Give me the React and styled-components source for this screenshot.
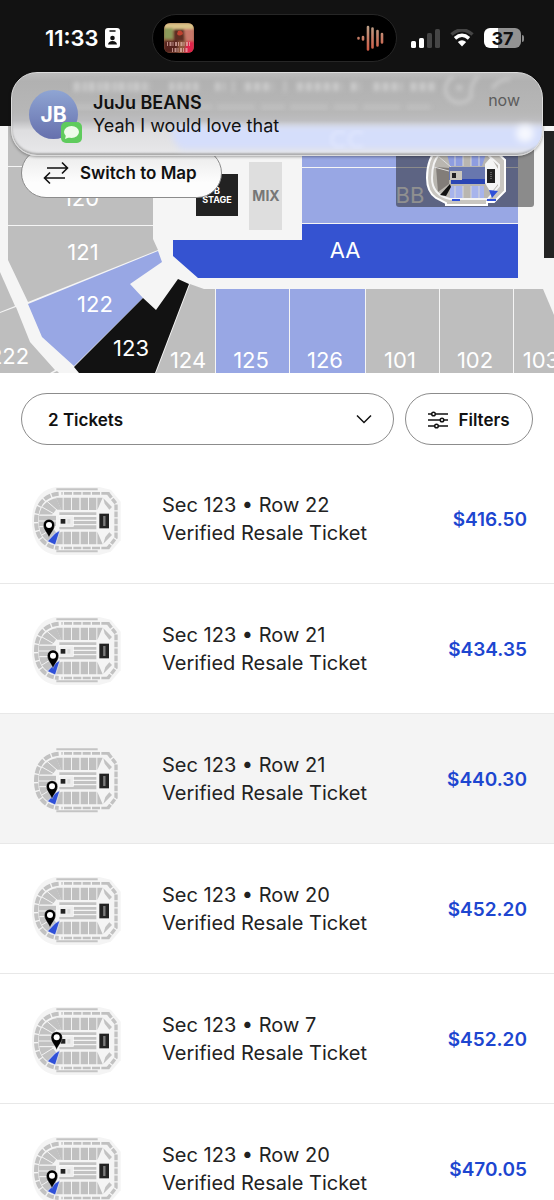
import React, { useState } from 'react'
import styled, { createGlobalStyle } from 'styled-components'

const GlobalStyle = createGlobalStyle`
	* {
		box-sizing: border-box;
	}
	body {
		margin: 0;
		background-color: #fff;
		font-family: Inter, "Liberation Sans", sans-serif;
		color: #222;
	}
	button, select {
		font-family: inherit;
		color: inherit;
	}
`

const Screen = styled.div`
	position: relative;
	display: flex;
	flex-direction: column;
	height: 100vh;
	overflow: hidden;
`

const Header = styled.header`
	flex: none;
	height: 126px;
	padding: 14px 30px 0;
	background-color: #121212;
	color: #fff;
`

const StatusBar = styled.div`
	display: flex;
	align-items: center;
	height: 48px;
`

const StatusGroup = styled.div`
	flex: 1 0 0;
	display: flex;
	align-items: center;
	justify-content: ${props => props.$align};
	gap: ${props => props.$gap}px;
`

const Time = styled.span`
	margin-left: 15px;
	font-size: 22px;
	font-weight: 600;
`

const Island = styled.div`
	display: flex;
	align-items: center;
	justify-content: space-between;
	width: 245px;
	height: 48px;
	margin-right: 5px;
	padding: 0 12px 0 11px;
	border: 1px solid #262626;
	border-radius: 24px;
	background-color: #000;
`

const Battery = styled.div`
	display: flex;
	align-items: center;
	justify-content: center;
	width: 37px;
	height: 20px;
	border-radius: 6px;
	background: linear-gradient(90deg, #fff 37%, #929292 37%);
	color: #111;
	font-size: 18px;
	font-weight: 700;
`

const BatteryTip = styled.div`
	width: 2px;
	height: 7px;
	margin-left: 1px;
	border-radius: 0 2px 2px 0;
	background-color: #8a8a8a;
`

const BatteryWrap = styled.div`
	display: flex;
	align-items: center;
`

const MapArea = styled.section`
	position: relative;
	flex: none;
`

const SeatMap = styled.svg`
	display: block;
	width: 100%;
	height: auto;
	font-size: 22px;
`

const SwitchButton = styled.button`
	position: absolute;
	top: 22px;
	left: 21px;
	display: flex;
	align-items: center;
	gap: 11px;
	height: 50px;
	padding: 0 24px 0 21px;
	border: 1px solid #8c8c8c;
	border-radius: 25px;
	background: linear-gradient(#e8e8e8, #fdfdfd 70%);
	color: #111;
	font-size: 17px;
	font-weight: 600;
	white-space: nowrap;
`

const Banner = styled.aside`
	position: absolute;
	top: 72px;
	left: 11px;
	right: 11px;
	display: flex;
	align-items: center;
	height: 84px;
	padding: 0 22px 0 17px;
	border: 1px solid #dcdcdc;
	border-radius: 26px;
	overflow: hidden;
	background: linear-gradient(#bdbdbd, #b1b1b1 10%, #b7b7b7 48%, #bdbdbf 58%, #dedee0 70%, #e8e8ea);
	box-shadow: inset 0 -2px 2px #aaa, 0 1px 3px rgba(0, 0, 0, 0.35);
`

const BannerGlow = styled.svg`
	position: absolute;
	top: 0;
	left: 0;
	width: 100%;
	height: 100%;
`

const Avatar = styled.div`
	position: relative;
	display: flex;
	align-items: center;
	justify-content: center;
	width: 49px;
	height: 49px;
	margin-right: 15px;
	border-radius: 50%;
	background: linear-gradient(#8fa5d3, #6670ad);
	color: #fff;
	font-size: 21px;
	font-weight: 700;
`

const AppBadge = styled.svg`
	position: absolute;
	right: -4px;
	bottom: -4px;
`

const Message = styled.div`
	position: relative;
	flex: 1;
	color: #111;
	font-size: 18px;
	line-height: 23px;
`

const Sender = styled.div`
	font-weight: 600;
`

const When = styled.span`
	position: relative;
	align-self: flex-start;
	margin-top: 17px;
	color: #5c5c5c;
	font-size: 16px;
	line-height: 20px;
`

const Toolbar = styled.div`
	flex: none;
	display: flex;
	gap: 11px;
	padding: 20px 21px 9px;
`

const SelectWrap = styled.label`
	position: relative;
	flex: 1;

	svg {
		position: absolute;
		top: 21px;
		right: 22px;
		pointer-events: none;
	}
`

const Select = styled.select`
	appearance: none;
	width: 100%;
	height: 52px;
	padding: 1px 26px 0;
	border: 1px solid #8c8c8c;
	border-radius: 26px;
	background-color: #fff;
	color: #111;
	font-size: 17px;
	font-weight: 600;
`

const FilterButton = styled.button`
	display: flex;
	align-items: center;
	justify-content: center;
	gap: 10px;
	width: 128px;
	height: 52px;
	padding: 1px 0 0;
	border: 1px solid #8c8c8c;
	border-radius: 26px;
	background-color: #fff;
	color: #111;
	font-size: 17px;
	font-weight: 600;
`

const TicketList = styled.ul`
	flex: 1;
	min-height: 0;
	margin: 0;
	padding: 0;
	overflow: hidden;
	list-style: none;
`

const TicketRow = styled.button`
	display: flex;
	align-items: center;
	width: 100%;
	height: 130px;
	padding: 4px 27px 0 32px;
	border: 0;
	border-bottom: 1px solid #e8e8e8;
	background-color: ${props => props.$active ? '#f4f4f4' : '#fff'};
	text-align: left;
	cursor: pointer;
`

const TicketInfo = styled.div`
	flex: 1;
	margin: 0 0 4px 40px;
	font-size: 20px;
	line-height: 28px;
`

const Price = styled.span`
	margin-bottom: 2px;
	color: #1d46d0;
	font-size: 19px;
	font-weight: 600;
`

const tickets = [
	{ id: 1, row: 22, price: '$416.50', pin: [51, 150] },
	{ id: 2, row: 21, price: '$434.35', pin: [63, 152] },
	{ id: 3, row: 21, price: '$440.30', pin: [60, 154] },
	{ id: 4, row: 20, price: '$452.20', pin: [54, 150] },
	{ id: 5, row: 7, price: '$452.20', pin: [74, 127] },
	{ id: 6, row: 20, price: '$470.05', pin: [60, 152] }
]

const GREY = '#bebebe'
const PALE = '#98a7e4'

const sections = [
	{ fill: GREY, points: '8,126 153,126 153,166 8,166' },
	{ fill: GREY, points: '8,167 153,167 153,225 8,225' },
	{ fill: GREY, points: '8,226 153,226 153,239 158,250 28,302 8,260' },
	{ fill: GREY, points: '0,272 15,306 0,312' },
	{ fill: GREY, points: '0,313 16,307 30,342 55,370 50,373 0,373' },
	{ fill: GREY, points: '57,371 59,373 53,373' },
	{ fill: PALE, points: '28,304 158,251 162,262 130,284 143,298 74,366 42,337' },
	{ fill: '#121212', points: '143,298 156,310 178,279 189,284 155,373 79,373 74,367' },
	{ fill: GREY, points: '190,284 204,289 215,289 215,373 156,373' },
	{ fill: PALE, points: '216,289 289,289 289,373 216,373' },
	{ fill: PALE, points: '290,289 365,289 365,373 290,373' },
	{ fill: GREY, points: '366,289 439,289 439,373 366,373' },
	{ fill: GREY, points: '440,289 513,289 513,373 440,373' },
	{ fill: GREY, points: '514,289 543,289 554,315 554,373 514,373' },
	{ fill: PALE, points: '302,126 518,126 518,167 302,167' },
	{ fill: PALE, points: '302,168 518,168 518,223 302,223' },
	{ fill: '#3553d1', points: '173,240 302,240 302,224 518,224 518,278 198,278 173,256' },
	{ fill: '#222', points: '196,174 238,174 238,216 196,216' },
	{ fill: '#dedede', points: '249,162 282,162 282,230 249,230' },
	{ fill: '#232323', points: '544,131 554,131 554,258 544,258' }
]

const sectionLabels = [
	['120', 81, 206],
	['121', 83, 260],
	['122', 95, 312],
	['222', 9, 364],
	['123', 131, 356],
	['124', 188, 368],
	['125', 251, 368],
	['126', 325, 368],
	['101', 400, 368],
	['102', 475, 368],
	['103', 541, 368],
	['AA', 345, 258],
	['BB', 410, 203]
]

const Overview = () => (
	<g>
		<rect x="396" y="140" width="138" height="67" rx="3" fill="#222" fillOpacity="0.5" />
		<path d="M438 148 H492 L505 160 V191 L494 202 H487 V205 H446 V203 L436 198 Q427 192 427 178 Q427 158 438 148Z" fill="#c9c6c1" stroke="#fff" strokeWidth="2" />
		<path d="M440 154 H487 L499 165 V186 L488 199 H450 Q432 195 432 178 Q432 161 440 154Z" fill="#b9b6b0" stroke="#f4f4f4" strokeWidth="2" />
		<path d="M447 154 H463 V166 H450Z M471 154 H486 L482 166 H471Z" fill="#8e9de0" />
		<path d="M450 186 H463 V198 H450Z M471 186 H484 V198 H471Z" fill="#a7b4ec" />
		<path d="M455 154 V166 M463 154 V166 M471 154 V166 M479 154 V166 M455 186 V198 M463 186 V198 M471 186 V198 M479 186 V198" stroke="#d8d8d8" />
		<path d="M436 167 L449 168 V184 L438 192Z" fill="#827d79" />
		<path d="M438 156 L451 167 M434 167 L449 171" stroke="#ddd" />
		<rect x="449" y="167" width="36" height="13" fill="#6877ae" />
		<rect x="451" y="179" width="34" height="5" fill="#2a45b4" />
		<rect x="450" y="171" width="12" height="9" fill="#cac7bd" />
		<rect x="452" y="173" width="4" height="5" fill="#222" />
		<path d="M485 164 L491 157 L498 169 V184 L491 193 L485 183Z" fill="#f5f5f5" />
		<rect x="487" y="169" width="8" height="14" fill="#222" />
		<path d="M491 172 V180" stroke="#999" strokeDasharray="1 1" />
		<path d="M450 184 L451 187 L446 196 L440 195Z" fill="#111" />
		<path d="M489 190 L498 191 L492 198Z M452 199 H460 V201 H452Z M487 199 H496 V201 H487Z" fill="#2f50d8" />
	</g>
)

const ArenaMap = () => (
	<SeatMap viewBox="0 126 554 247" role="img" aria-label="Seat map">
		<rect x="0" y="126" width="554" height="247" fill="#f5f5f5" />
		{sections.map(section => (
			<polygon key={section.points} points={section.points} fill={section.fill} />
		))}
		<g fill="#fff" textAnchor="middle">
			{sectionLabels.map(([name, x, y]) => (
				<text key={name} x={x} y={y}>{name}</text>
			))}
		</g>
		<g textAnchor="middle" fontWeight="700">
			<text x="217" y="194" fontSize="9" fill="#fff">B</text>
			<text x="217" y="203" fontSize="9" fill="#fff">STAGE</text>
			<text x="266" y="201" fontSize="14" fill="#777">MIX</text>
		</g>
		<Overview />
	</SeatMap>
)

const topBlocks = [95, 120, 146, 171]

const Thumbnail = ({ pin }) => (
	<svg width="90" height="68" viewBox="0 0 270 204" aria-hidden="true">
		<path d="M72 0 H202 L236 8 L266 44 V160 L236 194 L202 204 H72 C26 198 0 162 0 102 C0 42 26 6 72 0Z" fill="#f4f4f4" />
		<path d="M73 7 H197 M73 193 H197" stroke="#c4c4c4" strokeWidth="6" />
		<path d="M232 19 H88" stroke="#c0c0c0" strokeWidth="8" strokeDasharray="24 4" />
		<path d="M232 183 H88" stroke="#c0c0c0" strokeWidth="8" strokeDasharray="24 4" />
		<path d="M80 20 C36 24 12 56 12 102 C12 148 36 180 80 183" fill="none" stroke="#c2c2c2" strokeWidth="12" strokeDasharray="21 4" />
		<path d="M228 19 L252 50 V152 L228 183" fill="none" stroke="#c2c2c2" strokeWidth="10" strokeDasharray="17 4" />
		<path d="M73 34 L88 68 H72 L60 84 H22 C24 62 44 38 73 34Z" fill="#c2c2c2" />
		<path d="M20 86 H72 V118 H20Z" fill="#c2c2c2" />
		<path d="M22 120 H60 L72 136 H88 L73 172 C44 168 24 146 22 120Z" fill="#c2c2c2" />
		<path d="M20 102 H72 M24 84 L72 84 M24 119 L72 119 M30 60 L72 84 M44 42 L76 70 M30 144 L72 118 M44 166 L76 134" stroke="#f4f4f4" strokeWidth="3" />
		{topBlocks.map(x => (
			<path key={x} d={`M${x} 32 H${x + 22} V69 H${x}Z M${x} 134 H${x + 22} V172 H${x}Z`} fill="#c0c0c0" />
		))}
		<path d="M72 32 H92 V69 H88Z M196 32 H212 L196 69Z M88 134 H92 V172 H72Z M196 134 L212 172 H196Z" fill="#c0c0c0" />
		<path d="M214 34 L240 60 L232 68 L218 50Z M240 144 L214 170 L220 150 L232 136Z" fill="#c2c2c2" />
		<path d="M82 76 H193 V84 H82Z M82 90 H193 V98 H82Z M82 102 H193 V111 H82Z M82 115 H193 V127 H82Z" fill="#c2c2c2" />
		<rect x="82" y="87" width="42" height="31" fill="#eee" stroke="#fff" strokeWidth="2" />
		<rect x="86" y="96" width="14" height="14" fill="#222" />
		<rect x="106" y="96" width="9" height="14" fill="#ddd" />
		<polygon points="46,163 70,174 84,130 70,138" fill="#2f50d8" stroke="#f4f4f4" strokeWidth="2" />
		<rect x="202" y="80" width="29" height="44" fill="#222" />
		<path d="M217 88 V116" stroke="#999" strokeWidth="7" strokeDasharray="4 2" />
		<g transform={`translate(${pin[0]} ${pin[1]})`}>
			<path d="M0 2 C-4 -12 -17 -20 -17 -36 A17 17 0 0 1 17 -36 C17 -20 4 -12 0 2Z" fill="#000" stroke="#fff" strokeWidth="1" />
			<circle cx="0" cy="-36" r="9" fill="#fff" />
		</g>
	</svg>
)

const Notification = () => (
	<Banner role="status">
		<BannerGlow viewBox="0 0 532 84" preserveAspectRatio="none" aria-hidden="true">
			<defs>
				<filter id="soft" x="-10%" y="-60%" width="120%" height="220%">
					<feGaussianBlur stdDeviation="3" />
				</filter>
				<filter id="spot" x="-100%" y="-100%" width="300%" height="300%">
					<feGaussianBlur stdDeviation="4" />
				</filter>
				<filter id="faint">
					<feGaussianBlur stdDeviation="2" />
				</filter>
			</defs>
			<path d="M162 54 H540 V78 H170 Q156 66 162 54Z" fill="#d5defb" filter="url(#soft)" />
			<g fill="none" stroke="#cbcbcb" filter="url(#faint)">
				<path d="M62 14 H138" strokeWidth="10" strokeDasharray="6 3 4 2" />
				<path d="M158 14 H190 M204 14 H214" strokeWidth="9" strokeDasharray="5 3" />
				<path d="M222 8 V20 M274 8 V20" strokeWidth="2" />
				<path d="M234 14 H262 M286 14 H332 M340 14 H350 M363 14 H392 M400 14 H426" strokeWidth="9" strokeDasharray="6 3" />
				<path d="M60 35 H420" strokeWidth="6" strokeOpacity="0.4" strokeDasharray="38 6 24 5" />
				<path d="M443 4 A14 14 0 1 0 461 24 Q459 12 468 3" strokeWidth="3" />
				<circle cx="449" cy="15" r="2" strokeWidth="2" />
				<path d="M482 16 Q488 6 500 6" strokeWidth="3" />
			</g>
			<path d="M334 62 A8 8 0 1 0 334 74 M352 62 A8 8 0 1 0 352 74" fill="none" stroke="#e4eaff" strokeWidth="2" filter="url(#faint)" />
			<circle cx="515" cy="62" r="9" fill="#fff" fillOpacity="0.8" filter="url(#spot)" />
		</BannerGlow>
		<Avatar>
			JB
			<AppBadge width="21" height="21" viewBox="0 0 21 21" aria-hidden="true">
				<rect width="21" height="21" rx="5" fill="#5fcb5d" />
				<ellipse cx="10.5" cy="10" rx="7.5" ry="6" fill="#eefbea" />
				<path d="M5 13 L4 17 L9 15Z" fill="#eefbea" />
			</AppBadge>
		</Avatar>
		<Message>
			<Sender>JuJu BEANS</Sender>
			<div>Yeah I would love that</div>
		</Message>
		<When>now</When>
	</Banner>
)

const AlbumArt = () => (
	<svg width="30" height="30" viewBox="0 0 30 30" aria-hidden="true">
		<defs>
			<clipPath id="album"><rect width="30" height="30" rx="6" /></clipPath>
			<filter id="paint"><feGaussianBlur stdDeviation="1.2" /></filter>
		</defs>
		<g clipPath="url(#album)">
			<rect width="30" height="30" fill="#8f5a3f" />
			<g filter="url(#paint)">
				<path d="M0 0 H30 V7 H0Z" fill="#d9c288" />
				<path d="M0 5 H9 V16 H0Z" fill="#8a9a5a" />
				<path d="M10 6 H20 V18 H10Z" fill="#5d2f22" />
				<path d="M20 6 H30 V20 H22Z" fill="#c8786a" />
				<path d="M23 18 H30 V30 H20Z" fill="#e0244c" />
				<path d="M0 18 H14 V30 H0Z" fill="#55211c" />
			</g>
			<path d="M3 21 H26 M8 27 H24" stroke="#e8b9b4" strokeWidth="4" strokeDasharray="1 1.5 2 1" strokeOpacity="0.7" />
			<path d="M14 8 Q18 6 19 11 Q15 14 13 11Z" fill="#c0412f" />
		</g>
	</svg>
)

const PhoneStatus = () => (
	<StatusBar>
		<StatusGroup $align="flex-start" $gap={6}>
			<Time>11:33</Time>
			<svg width="15" height="20" viewBox="0 0 15 20" aria-hidden="true">
				<rect width="15" height="20" rx="3" fill="#fff" />
				<path d="M5 3 H10" stroke="#121212" strokeWidth="1.5" strokeLinecap="round" />
				<circle cx="7.5" cy="10" r="2.3" fill="#121212" />
				<path d="M3 16.5 Q3.5 13 7.5 13 Q11.5 13 12 16.5Z" fill="#121212" />
			</svg>
		</StatusGroup>
		<Island>
			<AlbumArt />
			<svg width="27" height="28" viewBox="0 0 27 28" aria-hidden="true">
				<defs>
					<linearGradient id="wave" gradientUnits="userSpaceOnUse" x1="0" y1="0" x2="0" y2="28">
						<stop offset="0" stopColor="#b9a48c" />
						<stop offset="1" stopColor="#d2553f" />
					</linearGradient>
				</defs>
				<path d="M1.5 14 V14.5 M6 13 V15.5 M11 3 V25.5 M15.5 4.5 V23.5 M20.5 7 V21.5 M25 10 V18.5" stroke="url(#wave)" strokeWidth="2.6" strokeLinecap="round" />
			</svg>
		</Island>
		<StatusGroup $align="flex-end" $gap={10}>
			<svg width="29" height="19" viewBox="0 0 29 19" aria-hidden="true">
				<rect x="0" y="12" width="5" height="7" rx="1.5" fill="#fff" />
				<rect x="8" y="9" width="5" height="10" rx="1.5" fill="#fff" />
				<rect x="16" y="4" width="5" height="15" rx="1.5" fill="#454545" />
				<rect x="24" y="0" width="5" height="19" rx="1.5" fill="#454545" />
			</svg>
			<svg width="24" height="18" viewBox="0 0 24 18" aria-hidden="true">
				<path d="M1.5 5.5 Q12 -3.5 22.5 5.5" fill="none" stroke="#454545" strokeWidth="3.5" />
				<path d="M5 9.3 Q12 3.3 19 9.3" fill="none" stroke="#fff" strokeWidth="3.5" />
				<path d="M12 17.5 L7.8 13 Q12 9.7 16.2 13Z" fill="#fff" />
			</svg>
			<BatteryWrap>
				<Battery>37</Battery>
				<BatteryTip />
			</BatteryWrap>
		</StatusGroup>
	</StatusBar>
)

const App = () => {
	const [quantity, setQuantity] = useState('2')
	const [selected, setSelected] = useState(3)

	return (
		<Screen>
			<GlobalStyle />
			<Header>
				<PhoneStatus />
			</Header>
			<MapArea>
				<ArenaMap />
				<SwitchButton type="button">
					<svg width="26" height="24" viewBox="0 0 26 24" fill="none" stroke="#111" strokeWidth="1.6" aria-hidden="true">
						<path d="M4 7 H24 M19 1.5 L24.5 7 L19 12.5 M22 17 H2 M7 11.5 L1.5 17 L7 22.5" />
					</svg>
					Switch to Map
				</SwitchButton>
			</MapArea>
			<Toolbar>
				<SelectWrap>
					<Select aria-label="Number of tickets" value={quantity} onChange={e => setQuantity(e.target.value)}>
						<option value="1">1 Ticket</option>
						<option value="2">2 Tickets</option>
						<option value="3">3 Tickets</option>
					</Select>
					<svg width="16" height="10" viewBox="0 0 16 10" fill="none" stroke="#111" strokeWidth="1.5" aria-hidden="true">
						<path d="M1 1.5 L8 8.5 L15 1.5" />
					</svg>
				</SelectWrap>
				<FilterButton type="button">
					<svg width="20" height="18" viewBox="0 0 20 18" fill="#fff" stroke="#111" strokeWidth="1.5" aria-hidden="true">
						<path d="M0 3 H20 M0 9 H20 M0 15 H20" />
						<circle cx="5.5" cy="3" r="1.8" />
						<circle cx="14" cy="9" r="1.8" />
						<circle cx="8.5" cy="15" r="1.8" />
					</svg>
					Filters
				</FilterButton>
			</Toolbar>
			<TicketList>
				{tickets.map(ticket => (
					<li key={ticket.id}>
						<TicketRow
							type="button"
							$active={selected === ticket.id}
							onClick={() => setSelected(ticket.id)}>
							<Thumbnail pin={ticket.pin} />
							<TicketInfo>
								<div>Sec 123 • Row {ticket.row}</div>
								<div>Verified Resale Ticket</div>
							</TicketInfo>
							<Price>{ticket.price}</Price>
						</TicketRow>
					</li>
				))}
			</TicketList>
			<Notification />
		</Screen>
	)
}

export default App
